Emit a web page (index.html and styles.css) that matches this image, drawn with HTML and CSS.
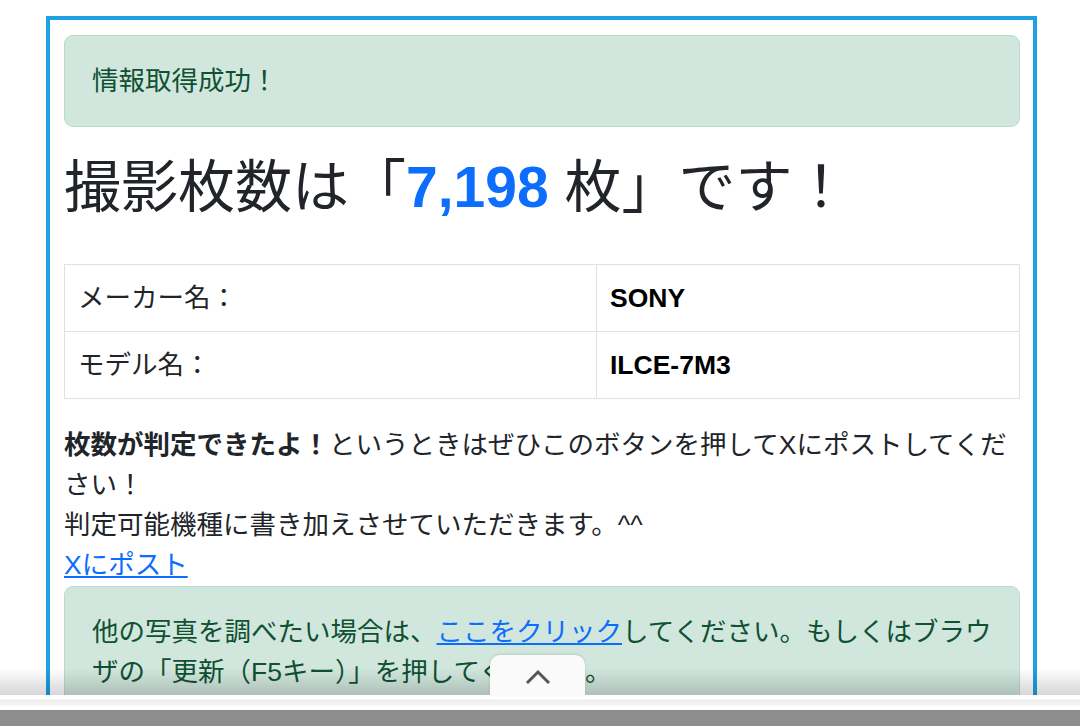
FILE: index.html
```html
<!DOCTYPE html>
<html lang="ja">
<head>
  <meta charset="UTF-8">
  <meta name="viewport" content="width=device-width, initial-scale=1.0">
  <title>撮影枚数チェッカー</title>
  <link rel="stylesheet" href="styles.css">
</head>
<body>
  <div class="frame">
    <div class="alert">情報取得成功！</div>

    <h1 class="count">撮影枚数は「<span class="num">7,198</span> 枚」です！</h1>

    <table class="info">
      <colgroup>
        <col class="col-label">
        <col>
      </colgroup>
      <tr>
        <td>メーカー名：</td>
        <td class="val">SONY</td>
      </tr>
      <tr>
        <td>モデル名：</td>
        <td class="val">ILCE-7M3</td>
      </tr>
    </table>

    <p class="msg">
      <strong>枚数が判定できたよ！</strong>というときはぜひこのボタンを押してXにポストしてください！<br>
      判定可能機種に書き加えさせていただきます。^^<br>
      <a href="#">Xにポスト</a>
    </p>

    <div class="alert next">
      他の写真を調べたい場合は、<a href="#">ここをクリック</a>してください。もしくはブラウザの「更新（F5キー）」を押してください。
    </div>
  </div>

  <div class="bottom-bar">
    <div class="tab">
      <svg width="26" height="16" viewBox="0 0 26 16">
        <path d="M2 14 L13 3 L24 14" fill="none" stroke="#555" stroke-width="3"/>
      </svg>
    </div>
    <div class="strip"></div>
    <div class="gray"></div>
  </div>
</body>
</html>
```

FILE: styles.css
```css
body { margin: 0; font-family: "Liberation Sans", "Noto Sans CJK JP", sans-serif; font-size: 26.5px; line-height: 40px; color: #212529; background: #fff; }
a { color: #0d6efd; }
.frame { box-sizing: border-box; width: 991px; margin: 16px 0 0 46px; border: 4px solid #1da1e2; padding: 15px 13px 200px 14px; }
.alert { background: #d1e7dd; border: 1px solid #badbcc; border-radius: 9px; color: #0f5132; padding: 25px 27px; margin-bottom: 26px; }
.alert.next { margin-top: 1px; }
.count { font-size: 57px; font-weight: normal; line-height: 68px; margin: 0 0 43px; color: #212529; }
.num { color: #0d6efd; font-weight: bold; }
.info { width: 100%; border-collapse: collapse; border: 1px solid #dee2e6; margin-bottom: 26px; }
.info td { border: 1px solid #dee2e6; padding: 13px 13px; }
.col-label { width: 532px; }
.val { font-weight: bold; color: #000; }
.msg { margin: 0; }
.bottom-bar { position: fixed; left: 0; right: 0; bottom: 0; height: 58px; display: flex; flex-direction: column; }
.bottom-bar::before { content: ""; height: 27px; background: linear-gradient(rgba(0,0,0,0), rgba(0,0,0,0.16)); }
.strip { height: 15px; background: #fff; border-top: 2px solid #fdfdfd; box-sizing: border-box; background: linear-gradient(#fff 0, #fff 2px, #eee 3px, #f6f6f6 8px, #fff 9px); }
.gray { height: 16px; background: #8d8d8d; }
.tab { position: absolute; left: 490px; top: -13px; width: 95px; height: 40px; background: #fafafa; border-radius: 10px 10px 0 0; box-shadow: 0 -1px 3px rgba(0,0,0,0.12); display: flex; justify-content: center; align-items: center; }
.tab svg { margin-top: 4px; }
```
